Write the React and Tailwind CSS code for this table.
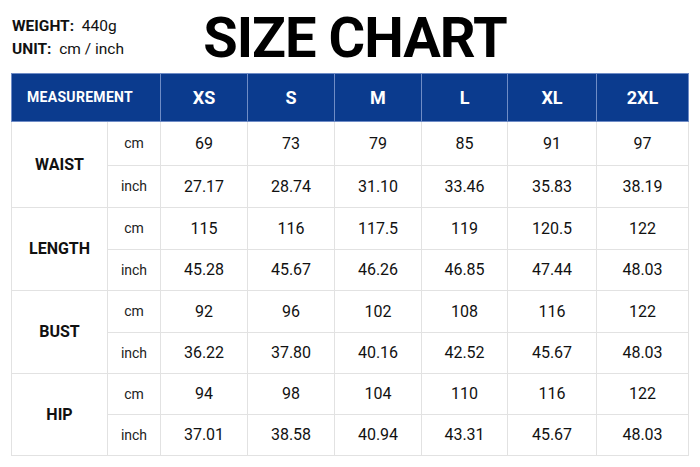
import React from 'react';

const sizes = ['XS', 'S', 'M', 'L', 'XL', '2XL'];

const rows = [
  { name: 'WAIST', cm: ['69', '73', '79', '85', '91', '97'], inch: ['27.17', '28.74', '31.10', '33.46', '35.83', '38.19'], h: ['h-[44px]', 'h-[42px]'] },
  { name: 'LENGTH', cm: ['115', '116', '117.5', '119', '120.5', '122'], inch: ['45.28', '45.67', '46.26', '46.85', '47.44', '48.03'], h: ['h-[42px]', 'h-[41px]'] },
  { name: 'BUST', cm: ['92', '96', '102', '108', '116', '122'], inch: ['36.22', '37.80', '40.16', '42.52', '45.67', '48.03'], h: ['h-[42px]', 'h-[41px]'] },
  { name: 'HIP', cm: ['94', '98', '104', '110', '116', '122'], inch: ['37.01', '38.58', '40.94', '43.31', '45.67', '48.03'], h: ['h-[41px]', 'h-[41px]'] },
];

const App = () => {
  return (
    <div className="w-[700px] h-[467px] bg-white text-[#111] font-['Roboto',sans-serif]">
      <div className="grid grid-cols-[1fr_auto_1fr] items-center h-[73px]">
        <div className="pl-[12px] pt-[2px] text-[15.5px] leading-[23px]">
          <div><span className="font-bold">WEIGHT:</span>&nbsp; 440g</div>
          <div><span className="font-bold">UNIT:</span>&nbsp; cm / inch</div>
        </div>
        <h1 className="text-[56px] font-bold leading-none tracking-[-1px] text-black pt-[2px] pl-[10px]">SIZE CHART</h1>
        <div />
      </div>

      <table className="ml-[11px] border-collapse table-fixed w-[677px]">
        <colgroup>
          <col className="w-[96px]" />
          <col className="w-[53px]" />
          <col className="w-[87px]" />
          <col className="w-[87px]" />
          <col className="w-[87px]" />
          <col className="w-[86px]" />
          <col className="w-[89px]" />
          <col className="w-[92px]" />
        </colgroup>
        <thead>
          <tr className="h-[48px] bg-[#0b3b8e] text-white">
            <th colSpan={2} className="border border-[#6f8cc6] text-left pl-[15px] text-[14px] font-bold tracking-[0.3px]">MEASUREMENT</th>
            {sizes.map((s) => (
              <th key={s} className="border border-[#6f8cc6] text-[18px] font-bold">{s}</th>
            ))}
          </tr>
        </thead>
        <tbody>
          {rows.map((r) => (
            <React.Fragment key={r.name}>
              <tr className={r.h[0]}>
                <td rowSpan={2} className="border border-[#e2e2e2] text-center text-[16px] font-bold">{r.name}</td>
                <td className="border border-[#e2e2e2] text-center text-[14px] text-[#222]">cm</td>
                {r.cm.map((v, i) => (
                  <td key={i} className="border border-[#e2e2e2] text-center text-[16px]">{v}</td>
                ))}
              </tr>
              <tr className={r.h[1]}>
                <td className="border border-[#e2e2e2] text-center text-[14px] text-[#222]">inch</td>
                {r.inch.map((v, i) => (
                  <td key={i} className="border border-[#e2e2e2] text-center text-[16px]">{v}</td>
                ))}
              </tr>
            </React.Fragment>
          ))}
        </tbody>
      </table>
    </div>
  );
};

export default App;
